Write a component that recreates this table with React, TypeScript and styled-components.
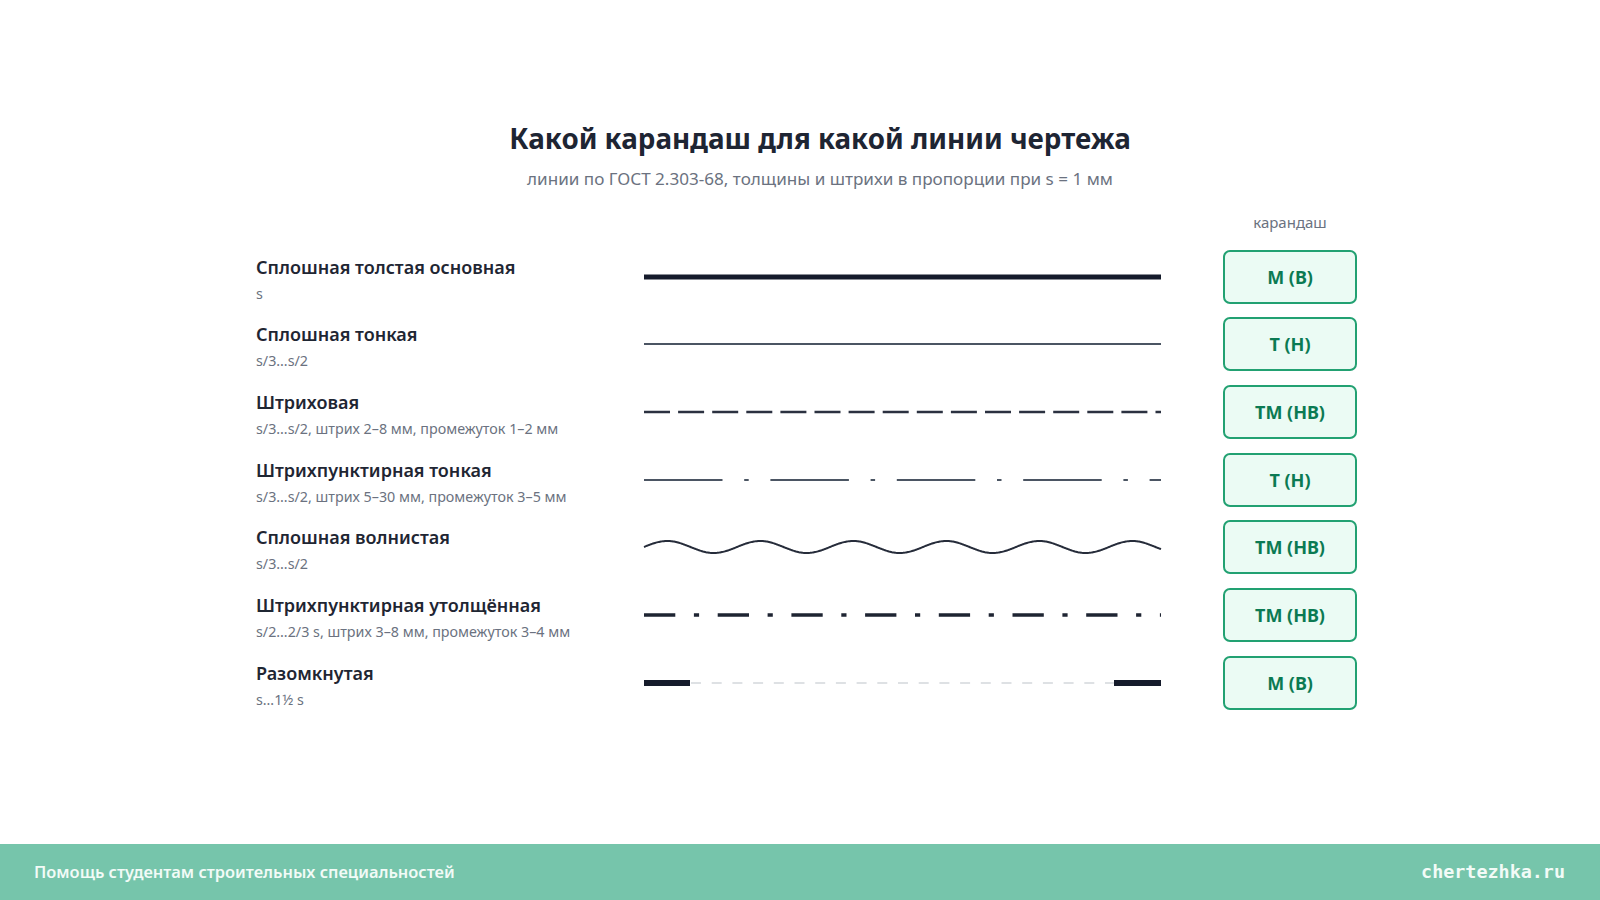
import React from "react";
import styled, { createGlobalStyle } from "styled-components";

const GlobalStyle = createGlobalStyle`
  html, body { margin: 0; padding: 0; background: #ffffff; }
  body { font-family: "Noto Sans", "Open Sans", sans-serif; color: #1f2633; }
`;

const Page = styled.div`
  width: 1600px;
  height: 900px;
  display: flex;
  flex-direction: column;
  overflow: hidden;
`;

const Main = styled.main`
  flex: 1;
  padding: 120px 0 0 256px;
  box-sizing: border-box;
`;

const Heading = styled.header`
  width: 1128px;
  text-align: center;
`;

const Title = styled.h1`
  margin: 0;
  font-size: 27.8px;
  line-height: 36px;
  font-weight: 700;
  color: #1e2533;
`;

const Subtitle = styled.p`
  margin: 11px 0 0;
  font-size: 17.1px;
  line-height: 24px;
  color: #6b7280;
`;

const Table = styled.div`
  width: 1101px;
  margin-top: 21px;
  display: flex;
  flex-direction: column;
`;

const ColumnHead = styled.div`
  display: flex;
  justify-content: flex-end;
  font-size: 15px;
  line-height: 20px;
  color: #6b7280;
  margin-bottom: 17.5px;
`;

const HeadCell = styled.span`
  width: 134px;
  text-align: center;
`;

const Rows = styled.div`
  display: flex;
  flex-direction: column;
  gap: 13.7px;
`;

const Row = styled.div`
  display: flex;
  align-items: center;
  height: 54px;
`;

const Label = styled.div`
  width: 388px;
  padding-top: 5px;
  display: flex;
  flex-direction: column;
`;

const LabelTitle = styled.div`
  font-size: 18px;
  line-height: 22px;
  font-weight: 600;
  color: #1f2633;
`;

const LabelNote = styled.div`
  margin-top: 7px;
  font-size: 14.3px;
  line-height: 18px;
  color: #6b7280;
`;

const Drawing = styled.svg`
  width: 517px;
  height: 24px;
  display: block;
  overflow: visible;
`;

const Pencil = styled.div`
  margin-left: 62px;
  width: 134px;
  height: 54px;
  box-sizing: border-box;
  border: 2px solid #22a172;
  border-radius: 7px;
  background: #ebfbf4;
  color: #0b7a53;
  font-size: 18px;
  font-weight: 700;
  display: flex;
  align-items: center;
  justify-content: center;
`;

const Footer = styled.footer`
  height: 56px;
  background: #76c5ab;
  display: flex;
  align-items: center;
  justify-content: space-between;
  padding: 0 35px 1px 34px;
  box-sizing: border-box;
`;

const FooterText = styled.span`
  font-size: 16.4px;
  font-weight: 600;
  color: #f2fbf7;
`;

const Brand = styled.span`
  font-family: "DejaVu Sans Mono", "Liberation Mono", monospace;
  font-size: 18.4px;
  font-weight: 700;
  color: #f2fbf7;
`;

type Kind = "thick" | "thin" | "dashed" | "dashdot" | "wavy" | "dashdotbold" | "open";

const W = 517;
const MID = 12;

function wavePath(): string {
  const amp = 6;
  const period = 93;
  let d = `M 0 ${MID}`;
  for (let x = 1; x <= W; x += 1) {
    const y = MID - amp * Math.sin((2 * Math.PI * x) / period);
    d += ` L ${x} ${y.toFixed(2)}`;
  }
  return d;
}

const LineSample: React.FC<{ kind: Kind }> = ({ kind }) => {
  const dark = "#151b2b";
  const grey = "#4b5563";
  return (
    <Drawing viewBox={`0 0 ${W} 24`}>
      {kind === "thick" && <line x1={0} y1={MID} x2={W} y2={MID} stroke={dark} strokeWidth={5} />}
      {kind === "thin" && <line x1={0} y1={MID} x2={W} y2={MID} stroke={grey} strokeWidth={2} />}
      {kind === "dashed" && (
        <line x1={0} y1={MID} x2={W} y2={MID} stroke="#2b3140" strokeWidth={2.5} strokeDasharray="26 8.1" />
      )}
      {kind === "dashdot" && (
        <line x1={0} y1={MID} x2={W} y2={MID} stroke={grey} strokeWidth={2} strokeDasharray="78.5 21.7 4.5 21.7" />
      )}
      {kind === "wavy" && <path d={wavePath()} fill="none" stroke="#262c3a" strokeWidth={2} />}
      {kind === "dashdotbold" && (
        <line x1={0} y1={MID} x2={W} y2={MID} stroke="#1e2432" strokeWidth={3.5} strokeDasharray="31.3 18.6 5.2 18.6" />
      )}
      {kind === "open" && (
        <>
          <line x1={46} y1={MID} x2={W - 47} y2={MID} stroke="#d4d7dc" strokeWidth={1.5} strokeDasharray="10 10.7" strokeDashoffset={-1} />
          <line x1={0} y1={MID} x2={46} y2={MID} stroke={dark} strokeWidth={6} />
          <line x1={W - 47} y1={MID} x2={W} y2={MID} stroke={dark} strokeWidth={6} />
        </>
      )}
    </Drawing>
  );
};

const rows: { title: string; note: string; kind: Kind; pencil: string }[] = [
  { title: "Сплошная толстая основная", note: "s", kind: "thick", pencil: "М (В)" },
  { title: "Сплошная тонкая", note: "s/3…s/2", kind: "thin", pencil: "Т (Н)" },
  { title: "Штриховая", note: "s/3…s/2, штрих 2–8 мм, промежуток 1–2 мм", kind: "dashed", pencil: "ТМ (НВ)" },
  { title: "Штрихпунктирная тонкая", note: "s/3…s/2, штрих 5–30 мм, промежуток 3–5 мм", kind: "dashdot", pencil: "Т (Н)" },
  { title: "Сплошная волнистая", note: "s/3…s/2", kind: "wavy", pencil: "ТМ (НВ)" },
  { title: "Штрихпунктирная утолщённая", note: "s/2…2/3 s, штрих 3–8 мм, промежуток 3–4 мм", kind: "dashdotbold", pencil: "ТМ (НВ)" },
  { title: "Разомкнутая", note: "s…1½ s", kind: "open", pencil: "М (В)" },
];

export default function App() {
  return (
    <Page>
      <GlobalStyle />
      <Main>
        <Heading>
          <Title>Какой карандаш для какой линии чертежа</Title>
          <Subtitle>линии по ГОСТ 2.303-68, толщины и штрихи в пропорции при s = 1 мм</Subtitle>
        </Heading>
        <Table>
          <ColumnHead>
            <HeadCell>карандаш</HeadCell>
          </ColumnHead>
          <Rows>
            {rows.map((r) => (
              <Row key={r.title}>
                <Label>
                  <LabelTitle>{r.title}</LabelTitle>
                  <LabelNote>{r.note}</LabelNote>
                </Label>
                <LineSample kind={r.kind} />
                <Pencil>{r.pencil}</Pencil>
              </Row>
            ))}
          </Rows>
        </Table>
      </Main>
      <Footer>
        <FooterText>Помощь студентам строительных специальностей</FooterText>
        <Brand>chertezhka.ru</Brand>
      </Footer>
    </Page>
  );
}
